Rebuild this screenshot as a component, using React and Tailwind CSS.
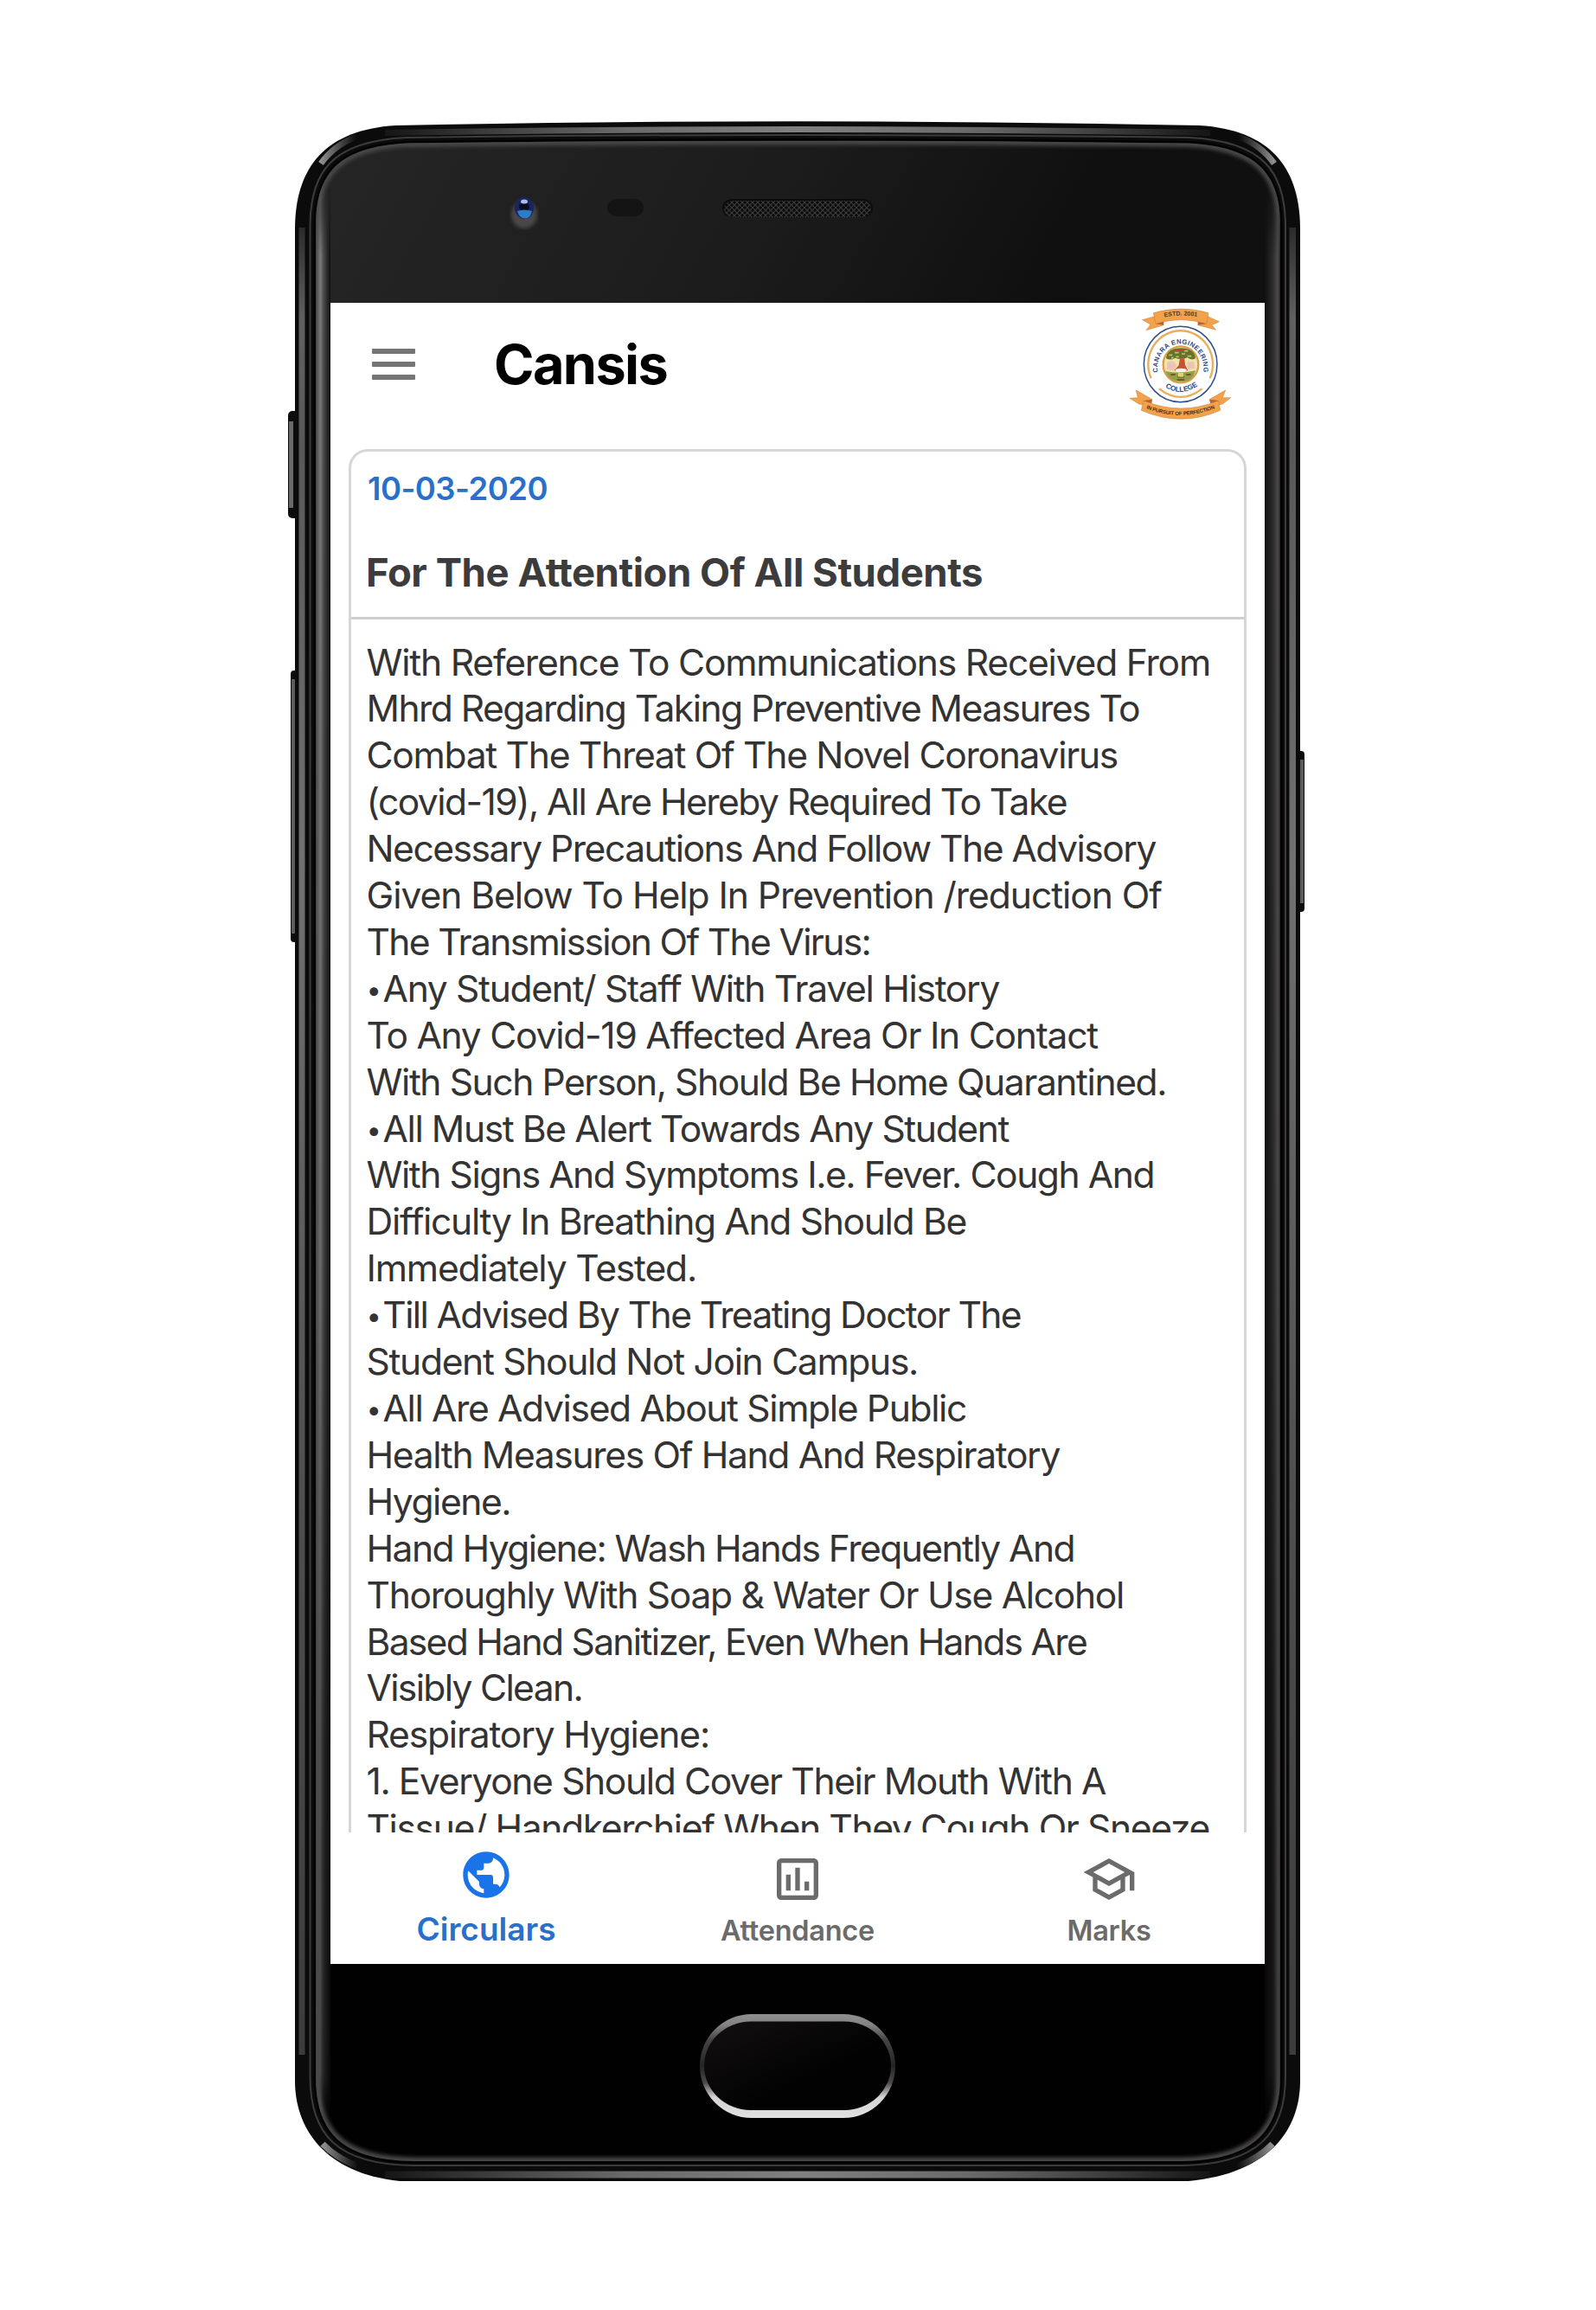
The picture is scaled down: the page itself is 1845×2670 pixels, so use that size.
import { useLayoutEffect, useRef } from "react";

const BODY = [
  ["With Reference To Communications Received From", 978],
  ["Mhrd Regarding Taking Preventive Measures To", 896],
  ["Combat The Threat Of The Novel Coronavirus", 871],
  ["(covid-19), All Are Hereby Required To Take", 812],
  ["Necessary Precautions And Follow The Advisory", 915],
  ["Given Below To Help In Prevention /reduction Of", 922],
  ["The Transmission Of The Virus:", 585],
  ["•Any Student/ Staff With Travel History", 734],
  ["To Any Covid-19 Affected Area Or In Contact", 848],
  ["With Such Person, Should Be Home Quarantined.", 927],
  ["•All Must Be Alert Towards Any Student", 745],
  ["With Signs And Symptoms I.e. Fever. Cough And", 913],
  ["Difficulty In Breathing And Should Be", 696],
  ["Immediately Tested.", 384],
  ["•Till Advised By The Treating Doctor The", 759],
  ["Student Should Not Join Campus.", 640],
  ["•All Are Advised About Simple Public", 696],
  ["Health Measures Of Hand And Respiratory", 804],
  ["Hygiene.", 169],
  ["Hand Hygiene: Wash Hands Frequently And", 821],
  ["Thoroughly With Soap & Water Or Use Alcohol", 878],
  ["Based Hand Sanitizer, Even When Hands Are", 835],
  ["Visibly Clean.", 252],
  ["Respiratory Hygiene:", 399],
  ["1. Everyone Should Cover Their Mouth With A", 857],
  ["Tissue/ Handkerchief When They Cough Or Sneeze", 977],
];

/* One line of text, tracked so that it fills the given width. */
function Line({ width, className = "", children }) {
  const ref = useRef(null);
  const bullet = children.startsWith("•");
  useLayoutEffect(() => {
    const el = ref.current;
    el.style.letterSpacing = "0px";
    const natural = el.getBoundingClientRect().width;
    el.style.letterSpacing = `${(width - natural) / children.length}px`;
  }, [width, children]);
  return (
    <div className={`whitespace-nowrap ${className}`}>
      <span ref={ref}>
        {bullet && <span className="mr-[3px] align-[3px] text-[31px] leading-none">•</span>}
        {bullet ? children.slice(1) : children}
      </span>
    </div>
  );
}

const GLASS =
  "M365 262 C365 205 386 170 470 165.500 Q922 160 1374 165.500 C1458 170 1480 205 1480 262 V2400 C1480 2462 1450 2497 1366 2498 H478 C392 2497 365 2462 365 2400 Z";

function PhoneBody() {
  return (
    <svg className="pointer-events-none absolute inset-0" width="1845" height="2670" viewBox="0 0 1845 2670" aria-hidden="true">
      <defs>
        <linearGradient id="glass" x1="0" x2="1" y1="0" y2="0.1">
          <stop offset="0" stopColor="#262626" />
          <stop offset="0.5" stopColor="#1c1c1c" />
          <stop offset="0.85" stopColor="#0f0f0f" />
          <stop offset="1" stopColor="#101010" />
        </linearGradient>
        <linearGradient id="edgeV" x1="0" x2="0" y1="0" y2="1">
          <stop offset="0" stopColor="#2c2c2c" />
          <stop offset="0.05" stopColor="#606060" />
          <stop offset="0.12" stopColor="#585858" />
          <stop offset="0.35" stopColor="#727072" />
          <stop offset="0.7" stopColor="#4e4e4e" />
          <stop offset="1" stopColor="#3c3c3c" />
        </linearGradient>
        <linearGradient id="topH" gradientUnits="userSpaceOnUse" x1="430" x2="1414" y1="0" y2="0">
          <stop offset="0" stopColor="#777" stopOpacity="0.05" />
          <stop offset="0.3" stopColor="#6a6a6a" />
          <stop offset="0.5" stopColor="#808080" />
          <stop offset="0.7" stopColor="#6a6a6a" />
          <stop offset="1" stopColor="#777" stopOpacity="0.05" />
        </linearGradient>
        <linearGradient id="rimL" x1="0" x2="1" y1="0" y2="0">
          <stop offset="0" stopColor="#3a3a3a" />
          <stop offset="0.35" stopColor="#7a7a7a" />
          <stop offset="0.6" stopColor="#444" />
          <stop offset="1" stopColor="#101010" />
        </linearGradient>
        <linearGradient id="rimR" x1="0" x2="1" y1="0" y2="0">
          <stop offset="0" stopColor="#101010" />
          <stop offset="0.5" stopColor="#2c2a2b" />
          <stop offset="0.85" stopColor="#4c4a4b" />
          <stop offset="1" stopColor="#222" />
        </linearGradient>
        <linearGradient id="fade" x1="0" x2="0" y1="0" y2="1">
          <stop offset="0" stopColor="#000" />
          <stop offset="0.04" stopColor="#fff" />
          <stop offset="0.55" stopColor="#ddd" />
          <stop offset="0.8" stopColor="#888" />
          <stop offset="0.97" stopColor="#777" />
          <stop offset="1" stopColor="#000" />
        </linearGradient>
        <mask id="rimMask">
          <rect x="360" y="205" width="1130" height="2260" fill="url(#fade)" />
        </mask>
        <linearGradient id="cornerA" x1="0" x2="1" y1="0" y2="0">
          <stop offset="0" stopColor="#909090" />
          <stop offset="1" stopColor="#909090" stopOpacity="0" />
        </linearGradient>
        <linearGradient id="cornerB" x1="1" x2="0" y1="0" y2="0">
          <stop offset="0" stopColor="#909090" />
          <stop offset="1" stopColor="#909090" stopOpacity="0" />
        </linearGradient>
        <filter id="soft" x="-5%" y="-5%" width="110%" height="110%">
          <feGaussianBlur stdDeviation="2" />
        </filter>
        <clipPath id="glassClip">
          <path d={GLASS} />
        </clipPath>
        <pattern id="mesh" width="6" height="6" patternUnits="userSpaceOnUse">
          <path d="M0 0 L6 6 M6 0 L0 6" stroke="#3a3a3a" strokeWidth="1.100" />
        </pattern>
        <linearGradient id="ring" x1="0" x2="0" y1="0" y2="1">
          <stop offset="0" stopColor="#8f8d8e" />
          <stop offset="0.1" stopColor="#858384" />
          <stop offset="0.25" stopColor="#454344" />
          <stop offset="0.5" stopColor="#262425" />
          <stop offset="0.66" stopColor="#4a4849" />
          <stop offset="0.8" stopColor="#d5d3d4" />
          <stop offset="1" stopColor="#e2e0e1" />
        </linearGradient>
        <linearGradient id="btnFace" x1="0" x2="1" y1="0" y2="1">
          <stop offset="0" stopColor="#121011" />
          <stop offset="0.6" stopColor="#030203" />
        </linearGradient>
      </defs>

      {/* side keys */}
      <rect x="333" y="475" width="16" height="124" rx="5" fill="#0c0c0c" />
      <rect x="334" y="487" width="5" height="100" fill="#6a6a6a" />
      <rect x="336" y="775" width="14" height="314" rx="4" fill="#0c0c0c" />
      <rect x="337" y="785" width="4" height="294" fill="#5c5c5c" />
      <rect x="1494" y="868" width="14" height="186" rx="4" fill="#0c0c0c" />
      <rect x="1503" y="878" width="4" height="166" fill="#5c5a5b" />

      {/* shell */}
      <path
        d="M341 265 C341 200 370 150 458 145 Q922 135.500 1386 145 C1474 150 1503 200 1503 265 V2405 C1503 2460 1469 2512 1374 2521 H462 C375 2512 341 2460 341 2405 Z"
        fill="#0b0b0b"
      />
      <path d="M445 153.500 Q922 145.500 1399 153.500" fill="none" stroke="url(#topH)" strokeWidth="7" />
      <path d="M445 2513.500 L1399 2513.400" fill="none" stroke="url(#topH)" strokeWidth="8" />
      <rect x="345.500" y="263" width="7" height="2112" fill="url(#edgeV)" />
      <rect x="1490.500" y="263" width="7.500" height="2112" fill="url(#edgeV)" />
      <path d="M371 189 Q386 168 412 158" fill="none" stroke="url(#cornerA)" strokeWidth="7" />
      <path d="M1473 189 Q1458 168 1432 158" fill="none" stroke="url(#cornerB)" strokeWidth="7" />
      <path d="M373 2478 Q388 2494 414 2504" fill="none" stroke="url(#cornerA)" strokeWidth="7" />
      <path d="M1471 2478 Q1456 2494 1430 2504" fill="none" stroke="url(#cornerB)" strokeWidth="7" />

      {/* seams between shell and glass */}
      <path
        d="M358.500 262 C358.500 200 382 163 470 159 Q922 153 1374 159 C1462 163 1486 200 1486 262 V2400 C1486 2466 1454 2502 1366 2503 H478 C388 2502 358.500 2466 358.500 2400 Z"
        fill="#0b0b0b"
        stroke="#3c3c3c"
        strokeWidth="2"
      />
      <path d={GLASS} fill="#020102" stroke="#000" strokeWidth="5" />
      <g clipPath="url(#glassClip)">
        <rect x="360" y="150" width="1130" height="201" fill="url(#glass)" />
        <path d={GLASS} fill="none" stroke="#484647" strokeWidth="9" filter="url(#soft)" />
        <g mask="url(#rimMask)">
          <rect x="364" y="205" width="18" height="2260" fill="url(#rimL)" />
          <rect x="1462" y="205" width="18" height="2260" fill="url(#rimR)" />
        </g>
      </g>

      {/* camera, sensor, speaker */}
      <ellipse cx="606" cy="248" rx="15" ry="16" fill="#4a4746" filter="url(#soft)" />
      <ellipse cx="606" cy="240.500" rx="11" ry="12.500" fill="#1a2560" />
      <ellipse cx="606" cy="239" rx="6" ry="5" fill="#0a0d22" />
      <path d="M598 244 Q606 241 615 244 Q613 252.500 607 252.500 Q600 252.500 598 244 Z" fill="#2f7bc4" />
      <ellipse cx="606" cy="233" rx="4" ry="2.500" fill="#a9bfe6" />
      <rect x="702" y="230" width="42" height="20" rx="10" fill="#141414" />
      <rect x="835" y="230" width="174" height="21" rx="10.500" fill="#0c0c0c" />
      <rect x="837" y="232" width="170" height="19" rx="9.500" fill="url(#mesh)" />

      {/* home key */}
      <rect x="809" y="2328" width="226" height="120" rx="60" fill="url(#ring)" />
      <rect x="814" y="2336.500" width="216" height="102.500" rx="54" fill="url(#btnFace)" />
    </svg>
  );
}

function Crest() {
  return (
    <svg width="150" height="145" viewBox="0 15 450 435" role="img" aria-label="Canara Engineering College">
      <defs>
        <path id="arcName" d="M146 262 A80 86 0 1 1 302 262" />
        <path id="arcCollege" d="M163 303 Q226 347 292 297" />
        <path id="arcEstd" d="M160 66 Q224 52 290 64" />
        <path id="arcMotto" d="M97 378 Q224 431 351 378" />
      </defs>
      <g fill="#f2a24a" stroke="#c27a35" strokeWidth="1.500">
        <path d="M92 74 L134 62 L166 92 L105 110 L120 90 Z" />
        <path d="M358 80 L318 62 L284 92 L347 109 L333 92 Z" />
        <path d="M130 50 Q226 22 321 50 L314 88 Q226 60 138 88 Z" />
        <path d="M70 318 L126 350 L108 372 L80 366 L48 346 L76 344 Z" />
        <path d="M380 318 L324 350 L342 372 L370 366 L398 344 L370 344 Z" />
        <path d="M96 354 Q226 408 356 354 L362 388 Q226 448 88 388 Z" />
      </g>
      <path d="M138 88 L166 80 L166 92 Z M314 88 L284 80 L284 92 Z M96 354 L126 350 L124 364 Z M356 354 L324 350 L328 364 Z" fill="#b5623a" />
      <ellipse cx="224" cy="228" rx="127" ry="131" fill="#fff" stroke="#2f4f8f" strokeWidth="4.500" />
      <path d="M122 277 A112 117 0 1 1 326 277" fill="none" stroke="#e9ae5a" strokeWidth="7" />
      <path d="M150 313 Q224 370 299 313" fill="none" stroke="#e9ae5a" strokeWidth="7" />
      <ellipse cx="225" cy="229" rx="61" ry="63" fill="#efe3b0" stroke="#dc9d45" strokeWidth="7" />
      <path d="M174 208 Q178 172 226 172 Q274 174 276 208 Q262 216 248 205 Q226 214 206 206 Q188 216 174 208 Z" fill="#65732f" />
      <path d="M184 196 h12 M204 188 h14 M228 192 h12 M248 200 h14 M208 202 h10 M236 182 h14 M192 206 h8" stroke="#c8c060" strokeWidth="5" />
      <path d="M210 178 h30" stroke="#c2402f" strokeWidth="6" />
      <path d="M178 222 Q200 210 210 232 L202 250 L176 246 Z M246 222 L270 218 L274 242 L250 246 Z" fill="#ecc3b4" />
      <path d="M222 208 L238 208 L240 230 L250 250 L202 250 L218 232 Z" fill="#c9532f" />
      <path d="M206 246 Q226 238 246 246 L238 256 H212 Z" fill="#fff3ee" />
      <path d="M172 252 Q224 262 276 250 Q266 290 226 288 Q182 288 172 252 Z" fill="#93a04a" />
      <path d="M190 264 h16 M214 272 h22 M244 264 h16 M212 282 h26" stroke="#6a3f20" strokeWidth="5" />
      <path d="M216 258 h18 v14 h-18 z" fill="#e3d375" />
      <g fontFamily="'Liberation Sans', sans-serif" textAnchor="middle">
        <text fontSize="23" fontWeight="700" fill="#2f4a86" letterSpacing="1.2">
          <textPath href="#arcName" startOffset="50%">CANARA ENGINEERING</textPath>
        </text>
        <text fontSize="25" fontWeight="700" fill="#2f4a86">
          <textPath href="#arcCollege" startOffset="50%">COLLEGE</textPath>
        </text>
        <text fontSize="21" fontWeight="700" fill="#4a3d2c">
          <textPath href="#arcEstd" startOffset="50%">ESTD. 2001</textPath>
        </text>
        <text fontSize="18" fontWeight="700" fill="#3f2f1c" letterSpacing="-0.4">
          <textPath href="#arcMotto" startOffset="50%">IN PURSUIT OF PERFECTION</textPath>
        </text>
      </g>
    </svg>
  );
}

function Icon({ d, className }) {
  return (
    <svg viewBox="0 0 24 24" fill="currentColor" className={className} aria-hidden="true">
      <path d={d} />
    </svg>
  );
}

const PUBLIC =
  "M12 2C6.480 2 2 6.480 2 12s4.480 10 10 10 10-4.480 10-10S17.520 2 12 2zm-1 17.930c-3.950-.49-7-3.850-7-7.930 0-.62.08-1.210.21-1.790L9 15v1c0 1.100.9 2 2 2v1.930zm6.900-2.540c-.26-.81-1-1.390-1.900-1.390h-1v-3c0-.55-.45-1-1-1H8v-2h2c.55 0 1-.45 1-1V7h2c1.100 0 2-.9 2-2v-.41c2.930 1.190 5 4.060 5 7.410 0 2.080-.8 3.970-2.100 5.390z";
const POLL =
  "M19 3H5c-1.100 0-2 .9-2 2v14c0 1.100.9 2 2 2h14c1.100 0 2-.9 2-2V5c0-1.100-.9-2-2-2zm0 16H5V5h14v14zM7 10h2v7H7zm4-3h2v10h-2zm4 6h2v4h-2z";
const SCHOOL =
  "M12 3L1 9l4 2.180v6L12 21l7-3.820v-6l2-1.090V17h2V9L12 3zm6.820 6L12 12.720 5.180 9 12 5.280 18.820 9zM17 15.990l-5 2.730-5-2.730v-3.720L12 15l5-2.730v3.720z";

export default function App() {
  return (
    <div className="relative h-[2670px] w-[1845px] overflow-hidden bg-white pt-[350px] pl-[382px] font-['Inter',sans-serif]">
      <PhoneBody />
      <main className="relative flex h-[1920px] w-[1080px] flex-col bg-white">
        <header className="flex h-[169px] shrink-0 items-start">
          <button className="mt-[53px] ml-12 flex w-[50px] flex-col gap-[9px]" aria-label="Menu">
            <span className="h-[6px] rounded-[1px] bg-[#757575]" />
            <span className="h-[6px] rounded-[1px] bg-[#757575]" />
            <span className="h-[6px] rounded-[1px] bg-[#757575]" />
          </button>
          <h1 className="mt-[31px] ml-[91px] text-[63px] leading-[80px] font-bold text-black">
            <Line width={200}>Cansis</Line>
          </h1>
          <div className="mr-[22px] ml-auto">
            <Crest />
          </div>
        </header>

        <section className="mx-[21px] min-h-0 flex-1 overflow-hidden rounded-t-[22px] border-[3px] border-b-0 border-[#d6d6d6] text-[#333]">
          <div className="-mx-[3px] border-b-[3px] border-[#cecece] pt-[21px] pb-[23px] pl-5">
            <Line width={208} className="ml-[2px] text-[36.5px] leading-[44px] font-semibold text-[#2a70cb]">
              10-03-2020
            </Line>
            <h2 className="mt-[47px] text-[45.5px] leading-[56px] font-bold text-[#3c3c3c]">
              <Line width={713}>For The Attention Of All Students</Line>
            </h2>
          </div>
          <div className="pt-[22.5px] pl-[17.5px] text-[42.6px] leading-[53.9px]">
            {BODY.map(([text, width]) => (
              <Line key={text} width={width - 2.5}>
                {text}
              </Line>
            ))}
          </div>
        </section>

        <nav className="grid h-[152px] shrink-0 grid-cols-3 bg-white text-[#6b6b6b]">
          <div className="flex flex-col items-center pt-[16px] text-[#1a73e8]">
            <Icon d={PUBLIC} className="h-[66px] w-[64px]" />
            <Line width={161} className="mt-[7px] text-[37px] leading-[46px] font-semibold text-[#2a70cb]">
              Circulars
            </Line>
          </div>
          <div className="flex flex-col items-center pt-[22px]">
            <Icon d={POLL} className="size-16" />
            <Line width={178} className="mt-[8px] text-[32.5px] leading-[40px] font-semibold">
              Attendance
            </Line>
          </div>
          <div className="flex flex-col items-center pt-[22px]">
            <Icon d={SCHOOL} className="size-16" />
            <Line width={97} className="mt-[8px] text-[32.5px] leading-[40px] font-semibold">
              Marks
            </Line>
          </div>
        </nav>
      </main>
    </div>
  );
}
